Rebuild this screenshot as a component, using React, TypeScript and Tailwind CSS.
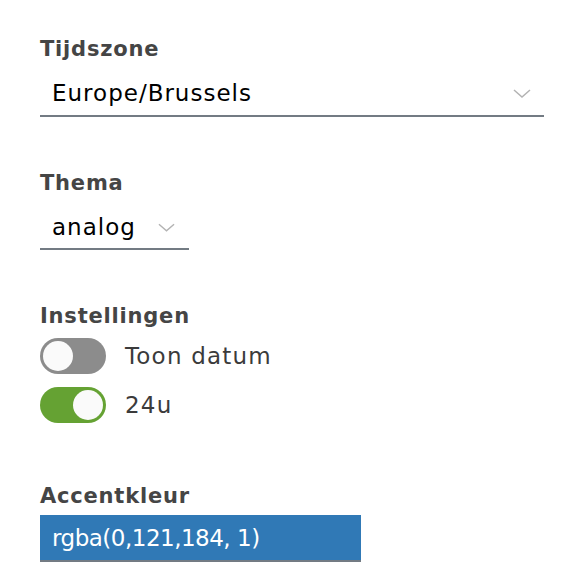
import React, { useState } from "react";

const Chevron = ({ className }: { className?: string }) => (
  <svg
    viewBox="0 0 18 9"
    className={className}
    fill="none"
    stroke="#b3b3b3"
    strokeWidth="1.5"
  >
    <path d="M1 1 L9 8 L17 1" />
  </svg>
);

const Toggle = ({
  checked,
  onChange,
  label,
}: {
  checked: boolean;
  onChange: () => void;
  label: string;
}) => (
  <button type="button" onClick={onChange} className="flex items-center gap-[19px]">
    <span
      className={`flex h-[36px] w-[66px] items-center rounded-full px-[3px] ${
        checked ? "justify-end bg-[#65a233]" : "justify-start bg-[#8c8c8c]"
      }`}
    >
      <span className="h-[30px] w-[30px] rounded-full bg-[#fafafa]" />
    </span>
    <span className="text-[23px] leading-[28px] tracking-[1.2px] text-[#3b3b3b]">{label}</span>
  </button>
);

const labelCls = "text-[21px] font-bold leading-[24px] tracking-[0.8px] text-[#454545]";
const valueCls = "text-[23px] leading-[28px] tracking-[1px]";

const App = () => {
  const [showDate, setShowDate] = useState(false);
  const [h24, setH24] = useState(true);

  return (
    <div
      className="h-[566px] w-[580px] bg-white pl-[40px] pt-[37px]"
      style={{ fontFamily: "'DejaVu Sans', 'Open Sans', sans-serif" }}
    >
      <div className="w-[504px]">
        <div className={labelCls}>Tijdszone</div>
        <div className="mt-[18px] flex items-center justify-between border-b-2 border-[#737b83] pb-[8px] pl-[12px] pr-[13px]">
          <span className={`${valueCls} text-black`}>Europe/Brussels</span>
          <Chevron className="h-[9px] w-[18px]" />
        </div>
      </div>

      <div className="mt-[54px] w-[149px]">
        <div className={labelCls}>Thema</div>
        <div className="mt-[18px] flex items-center justify-between border-b-2 border-[#737b83] pb-[7px] pl-[12px] pr-[14px]">
          <span className={`${valueCls} text-black`}>analog</span>
          <Chevron className="h-[9px] w-[17px]" />
        </div>
      </div>

      <div className="mt-[54px]">
        <div className={labelCls}>Instellingen</div>
        <div className="mt-[10px] flex flex-col items-start gap-[13px]">
          <Toggle checked={showDate} onChange={() => setShowDate(!showDate)} label="Toon datum" />
          <Toggle checked={h24} onChange={() => setH24(!h24)} label="24u" />
        </div>
      </div>

      <div className="mt-[61px]">
        <div className={labelCls}>Accentkleur</div>
        <div className="mt-[7px] flex h-[47px] w-[321px] items-center border-b-2 border-[#737b83] bg-[#3079b6] pl-[12px]">
          <span className="text-[23px] leading-[28px] tracking-[-0.5px] text-white">rgba(0,121,184, 1)</span>
        </div>
      </div>
    </div>
  );
};

export default App;
